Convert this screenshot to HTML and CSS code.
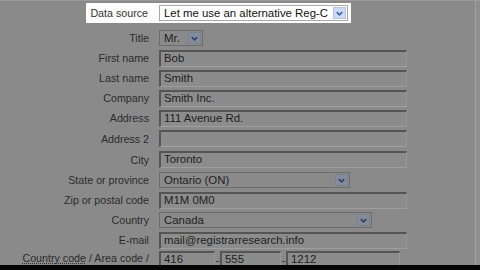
FILE: index.html
```html
<!DOCTYPE html>
<html>
<head>
<meta charset="utf-8">
<link rel="stylesheet" href="styles.css">
</head>
<body>
<div class="frame">
  <div class="screen">
    <div class="content">
      <div class="ds">
        <div class="ds-label">Data source</div>
        <div class="sel sel-ds">
          <span class="sel-text">Let me use an alternative Reg-C</span>
          <span class="btn btn-light"><svg viewBox="0 0 10 10" width="9" height="9"><path d="M2 3.5 L5 6.5 L8 3.5" fill="none" stroke="#3f63b8" stroke-width="1.8"/></svg></span>
        </div>
      </div>
      <div class="form">
        <div class="row"><div class="lbl">Title</div><div class="sel sel-title"><span class="sel-text">Mr.</span><span class="btn btn-dim"><svg viewBox="0 0 10 10" width="9" height="9"><path d="M2 3.5 L5 6.5 L8 3.5" fill="none" stroke="#2f3f6a" stroke-width="1.8"/></svg></span></div></div>
        <div class="row"><div class="lbl">First name</div><div class="inp">Bob</div></div>
        <div class="row"><div class="lbl">Last name</div><div class="inp">Smith</div></div>
        <div class="row"><div class="lbl">Company</div><div class="inp">Smith Inc.</div></div>
        <div class="row"><div class="lbl">Address</div><div class="inp">111 Avenue Rd.</div></div>
        <div class="row row-tall"><div class="lbl">Address 2</div><div class="inp"></div></div>
        <div class="row row-tall"><div class="lbl">City</div><div class="inp">Toronto</div></div>
        <div class="row"><div class="lbl">State or province</div><div class="sel sel-state"><span class="sel-text">Ontario (ON)</span><span class="btn btn-dim"><svg viewBox="0 0 10 10" width="9" height="9"><path d="M2 3.5 L5 6.5 L8 3.5" fill="none" stroke="#2f3f6a" stroke-width="1.8"/></svg></span></div></div>
        <div class="row"><div class="lbl">Zip or postal code</div><div class="inp">M1M 0M0</div></div>
        <div class="row"><div class="lbl">Country</div><div class="sel sel-country"><span class="sel-text">Canada</span><span class="btn btn-dim"><svg viewBox="0 0 10 10" width="9" height="9"><path d="M2 3.5 L5 6.5 L8 3.5" fill="none" stroke="#2f3f6a" stroke-width="1.8"/></svg></span></div></div>
        <div class="row"><div class="lbl">E-mail</div><div class="inp">mail@registrarresearch.info</div></div>
        <div class="row row-phone">
          <div class="lbl lbl-phone"><span class="abbr">Country code</span> / Area code /<br>Phone</div>
          <div class="phone">
            <div class="inp p1">416</div><span class="dash">-</span>
            <div class="inp p2">555</div><span class="dash">-</span>
            <div class="inp p3">1212</div>
          </div>
        </div>
      </div>
    </div>
    <div class="edge"></div>
  </div>
  <div class="bar"></div>
</div>
</body>
</html>
```
FILE: styles.css
```css
* { box-sizing: border-box; }
html, body { margin: 0; padding: 0; }
body {
  width: 480px;
  height: 270px;
  overflow: hidden;
  background: #000;
  font-family: "Liberation Sans", Arial, sans-serif;
}
.frame {
  display: flex;
  flex-direction: column;
  height: 270px;
}
.screen {
  display: flex;
  height: 265px;
  overflow: hidden;
  background: #8a8a8a;
  border-top: 1px solid #9a9a9a;
}
.content {
  width: 475px;
  flex: none;
}
.edge {
  flex: 1;
  border-left: 1px solid #a2a2a2;
  background: #8f8f8f;
}
.bar {
  flex: 1;
  background: #050505;
}
.ds {
  margin-left: 86px;
  margin-top: 2px;
  width: 265px;
  height: 20px;
  background: #fdfdfd;
  display: flex;
  align-items: center;
}
.ds-label {
  width: 63px;
  text-align: right;
  padding-right: 1px;
  font-size: 10.7px;
  color: #333;
}
.sel {
  display: flex;
  align-items: center;
  height: 16px;
  border: 1px solid #6c6c6c;
  padding: 1px;
  font-size: 11.4px;
}
.sel-ds {
  margin-left: 10px;
  width: 189px;
  border-color: #a9a9a9;
  background: #fff;
  color: #111;
}
.sel-text {
  flex: 1;
  padding-left: 3px;
  white-space: nowrap;
  overflow: hidden;
  line-height: 13px;
}
.btn {
  width: 13px;
  height: 12px;
  display: flex;
  align-items: center;
  justify-content: center;
  flex: none;
}
.btn-light {
  background: #cddaf3;
  border: 1px solid #b5c5e6;
}
.btn-dim {
  background: #848b9b;
  border: 1px solid #7a8292;
}
.form {
  margin-top: 5px;
  display: flex;
  flex-direction: column;
}
.row {
  display: grid;
  grid-template-columns: 149px 248px;
  column-gap: 10px;
  align-items: center;
  height: 20px;
}
.row-tall { height: 21px; }
.lbl {
  text-align: right;
  font-size: 10.7px;
  color: #2c2c2c;
  white-space: nowrap;
}
.inp {
  height: 17px;
  border-top: 2px solid #555;
  border-left: 2px solid #555;
  border-bottom: 1px solid #9e9e9e;
  border-right: 1px solid #989898;
  background: #8c8c8c;
  padding-left: 3px;
  font-size: 11.4px;
  line-height: 13px;
  color: #1e1e1e;
  white-space: nowrap;
}
.sel-title { width: 44px; background: #8a8a8a; color: #1e1e1e; }
.sel-state { width: 191px; background: #8a8a8a; color: #1e1e1e; }
.sel-country { width: 213px; background: #8a8a8a; color: #1e1e1e; }
.row-phone {
  align-items: start;
  height: 30px;
  margin-top: -2px;
}
.lbl-phone {
  padding-top: 4px;
  line-height: 12px;
}
.abbr {
  text-decoration: underline dotted #333;
}
.phone {
  display: flex;
  align-items: flex-start;
  margin-top: 3px;
}
.phone .inp { height: 20px; }
.p1 { width: 56px; }
.p2 { width: 61px; }
.p3 { width: 114px; }
.dash {
  width: 5px;
  margin-top: 4px;
  font-size: 11px;
  line-height: 10px;
  text-align: center;
  color: #2c2c2c;
}
```
